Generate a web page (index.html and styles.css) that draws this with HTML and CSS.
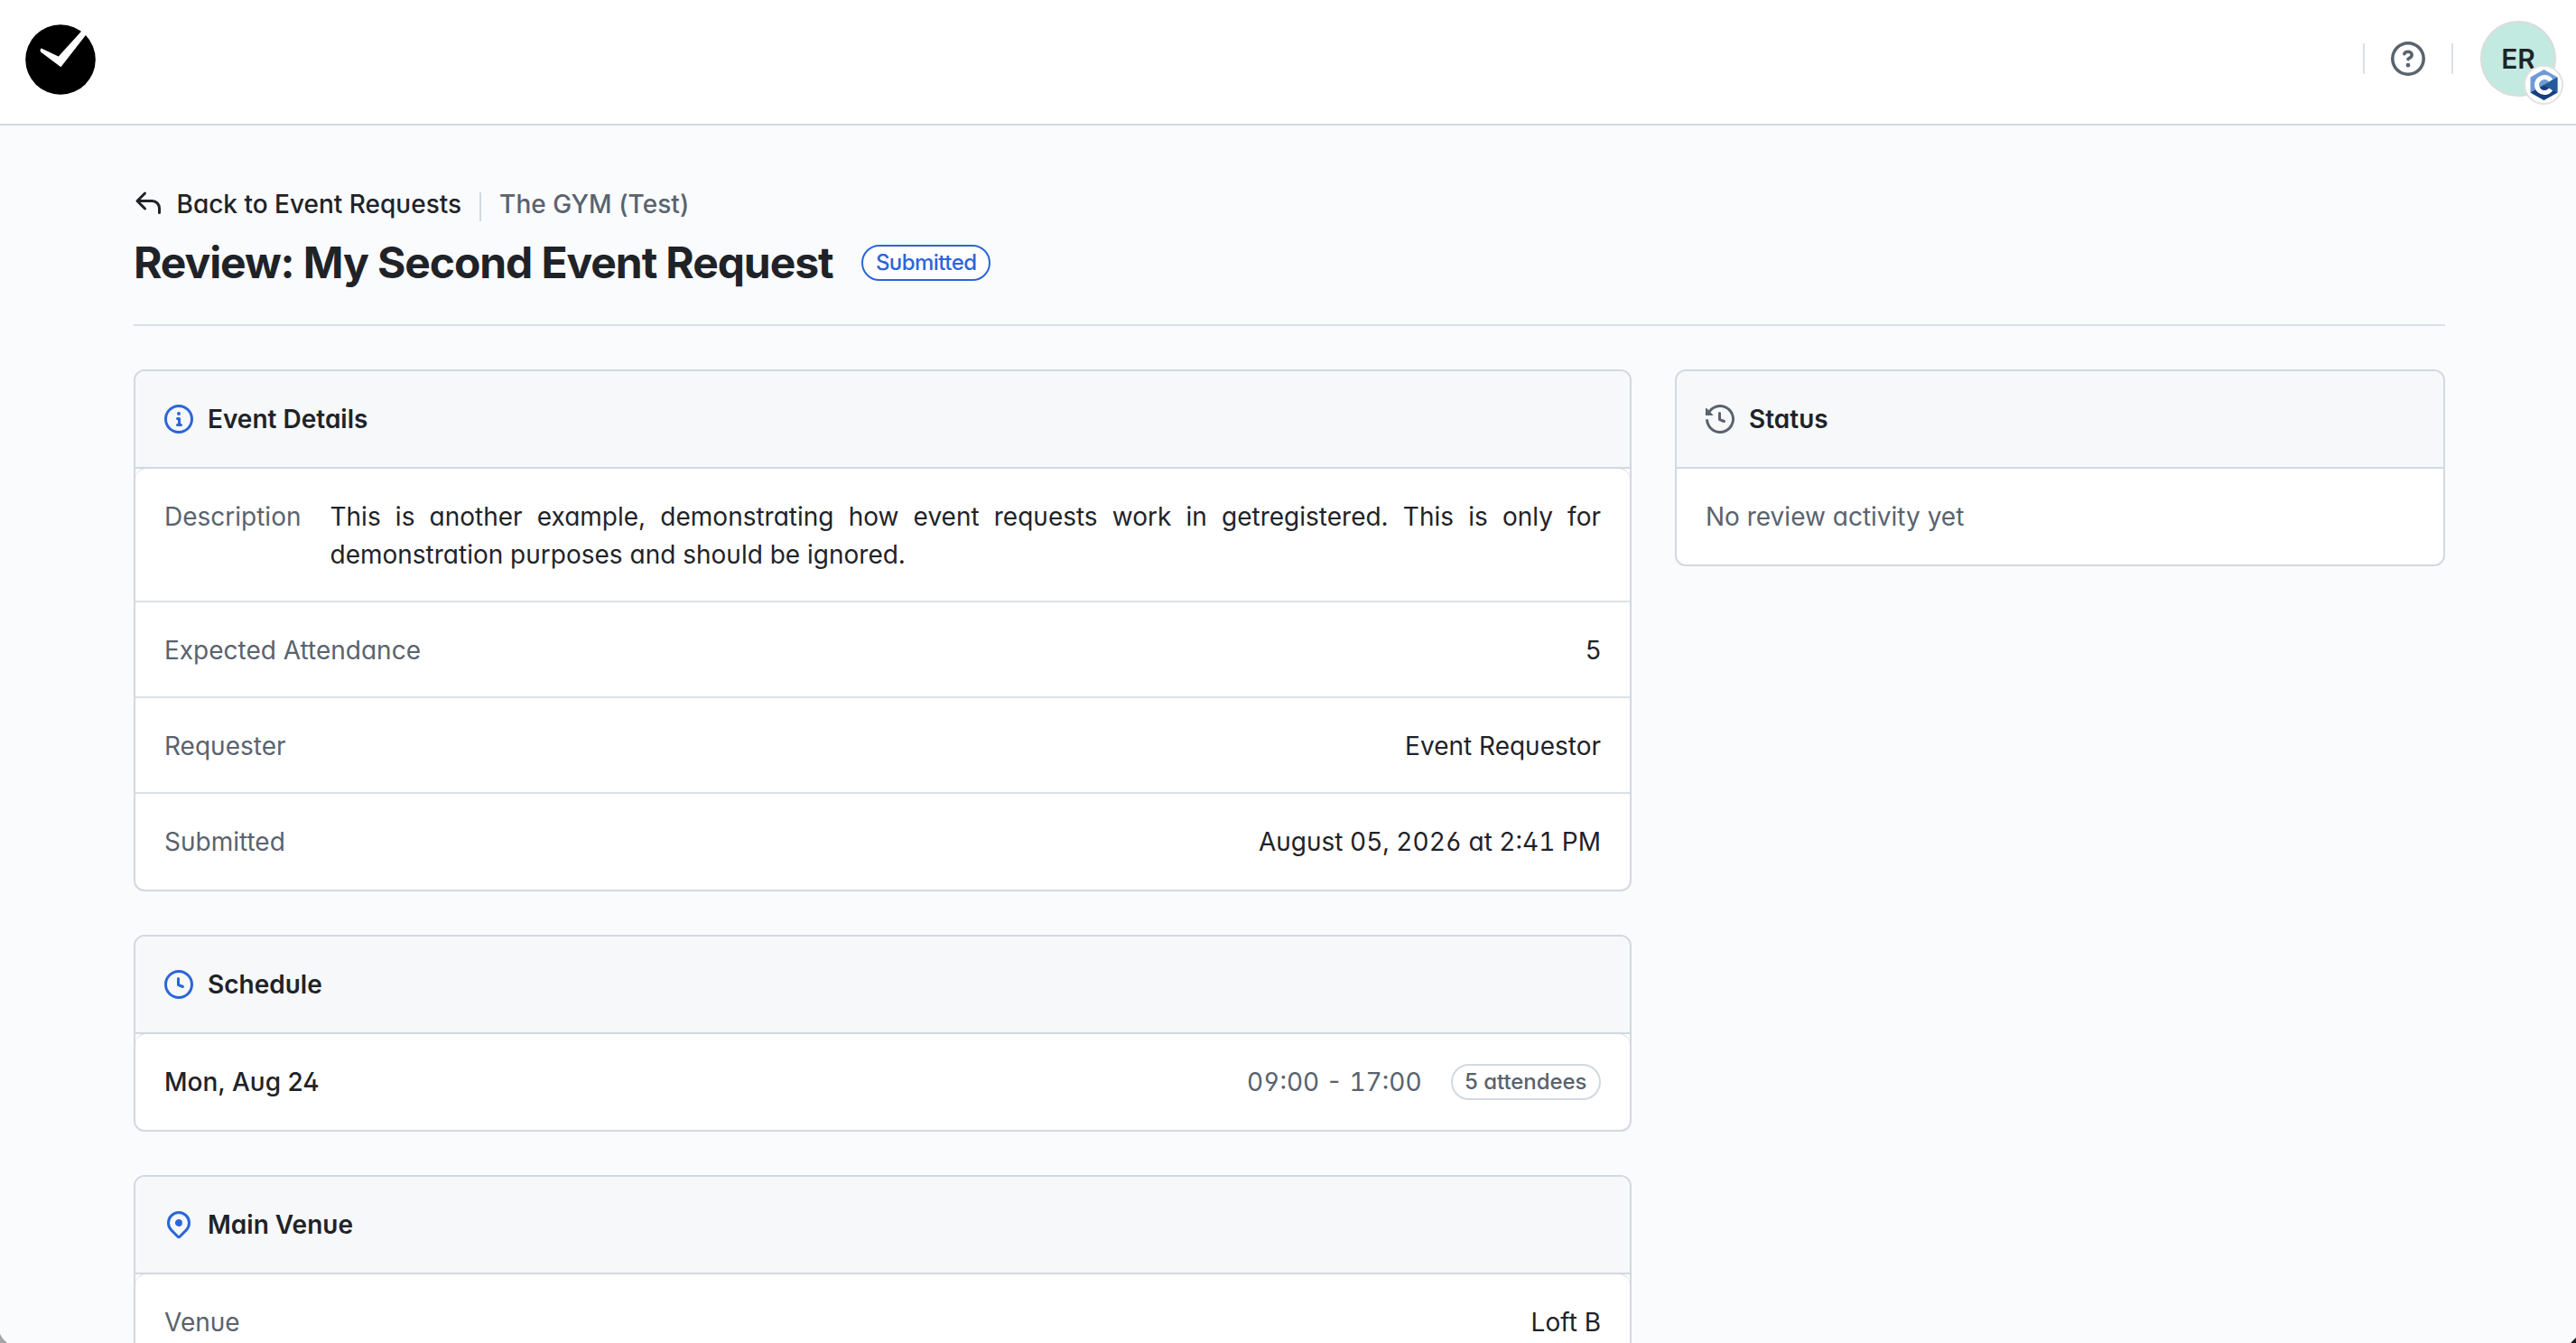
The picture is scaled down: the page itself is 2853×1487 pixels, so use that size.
FILE: index.html
```html
<!DOCTYPE html>
<html lang="en">
<head>
<meta charset="utf-8">
<title>Review: My Second Event Request</title>
<link rel="stylesheet" href="styles.css">
</head>
<body>
<header class="topbar">
  <a class="logo" href="#" aria-label="Home">
    <svg viewBox="0 0 78 78" width="78" height="78"><circle cx="39" cy="39" r="38.8"/><path fill="#fff" d="M36.8 35.4 62 7.8 68 0l8 0-9.5 12.4L39.4 47.2 17 30.4c-.8-2-.4-3.4.8-4Z"/></svg>
  </a>
  <nav class="topbar-actions">
    <span class="divider"></span>
    <a class="help" href="#" aria-label="Help">
      <svg class="icon" viewBox="0 0 16 16"><path d="M0 8a8 8 0 1 1 16 0A8 8 0 0 1 0 8Zm8-6.5a6.5 6.5 0 1 0 0 13 6.5 6.5 0 0 0 0-13ZM6.92 6.085h.001a.749.749 0 1 1-1.342-.67c.169-.339.436-.701.849-.977C6.845 4.16 7.369 4 8 4a2.756 2.756 0 0 1 1.637.525c.503.377.863.965.863 1.725 0 .448-.115.83-.329 1.15-.205.307-.47.513-.692.662-.109.072-.22.138-.313.195l-.006.004a6.24 6.24 0 0 0-.26.16.952.952 0 0 0-.276.245.75.75 0 0 1-1.248-.832c.184-.264.42-.489.692-.661.103-.067.207-.132.313-.195l.007-.004c.1-.061.182-.11.258-.161a.969.969 0 0 0 .277-.245C8.96 6.514 9 6.427 9 6.25a.612.612 0 0 0-.262-.525A1.27 1.27 0 0 0 8 5.5c-.369 0-.595.09-.74.187a1.01 1.01 0 0 0-.34.398ZM9 11a1 1 0 1 1-2 0 1 1 0 0 1 2 0Z"/></svg>
    </a>
    <span class="divider"></span>
    <div class="avatar">ER
      <span class="avatar-badge">
        <svg viewBox="0 0 30 34" width="31" height="34"><path fill="#6f9bd4" d="M15 0 30 8.5v17L15 34 0 25.500v-17Z"/><path fill="#25599c" d="M30 8.500v17L15 17Z"/><path fill="#184080" d="M0 25.500 15 17l15 8.500L15 34Z"/><path fill="none" stroke="#fff" stroke-width="5" d="M22.600 12.200a8.500 8.500 0 1 0 0 9.600"/></svg>
      </span>
    </div>
  </nav>
</header>

<main class="page">
  <div class="page-header">
    <div class="crumbs">
      <a class="back" href="#">
        <svg class="icon" viewBox="0 0 16 16"><path d="M6.78 1.97a.75.75 0 0 1 0 1.06L3.81 6h6.44A4.75 4.75 0 0 1 15 10.75v2.5a.75.75 0 0 1-1.5 0v-2.5a3.25 3.25 0 0 0-3.25-3.25H3.81l2.97 2.97a.749.749 0 0 1-.326 1.275.749.749 0 0 1-.734-.215L1.47 7.28a.75.75 0 0 1 0-1.06l4.25-4.25a.75.75 0 0 1 1.06 0Z"/></svg>
        <span>Back to Event Requests</span>
      </a>
      <span class="crumb-divider"></span>
      <span class="muted crumb-org">The GYM (Test)</span>
    </div>
    <div class="title-row">
      <h1>Review: My Second Event Request</h1>
      <span class="pill pill-blue">Submitted</span>
    </div>
  </div>

  <div class="columns">
    <div class="main-column">
      <section class="card">
        <h2 class="card-header">
          <svg class="icon blue" viewBox="0 0 16 16"><path d="M0 8a8 8 0 1 1 16 0A8 8 0 0 1 0 8Zm8-6.5a6.5 6.5 0 1 0 0 13 6.5 6.5 0 0 0 0-13ZM6.5 7.75A.75.75 0 0 1 7.25 7h1a.75.75 0 0 1 .75.75v2.75h.25a.75.75 0 0 1 0 1.5h-2a.75.75 0 0 1 0-1.5h.25v-2h-.25a.75.75 0 0 1-.75-.75ZM8 6a1 1 0 1 1 0-2 1 1 0 0 1 0 2Z"/></svg>
          Event Details
        </h2>
        <div class="rows">
          <div class="row"><span class="muted">Description</span><p class="description">This is another example, demonstrating how event requests work in getregistered. This is only for demonstration purposes and should be ignored.</p></div>
          <div class="row"><span class="muted">Expected Attendance</span><span>5</span></div>
          <div class="row"><span class="muted">Requester</span><span>Event Requestor</span></div>
          <div class="row"><span class="muted">Submitted</span><span class="tabular">August 05, 2026 at 2:41 PM</span></div>
        </div>
      </section>

      <section class="card">
        <h2 class="card-header">
          <svg class="icon blue" viewBox="0 0 16 16"><path d="M8 0a8 8 0 1 1 0 16A8 8 0 0 1 8 0ZM1.5 8a6.5 6.5 0 1 0 13 0 6.5 6.5 0 0 0-13 0Zm7-3.25v2.992l2.028.812a.75.75 0 0 1-.557 1.392l-2.5-1A.751.751 0 0 1 7 8.25v-3.5a.75.75 0 0 1 1.5 0Z"/></svg>
          Schedule
        </h2>
        <div class="rows">
          <div class="row"><span class="date">Mon, Aug 24</span><span class="slot"><span class="muted tabular time">09:00 - 17:00</span><span class="pill">5 attendees</span></span></div>
        </div>
      </section>

      <section class="card">
        <h2 class="card-header">
          <svg class="icon blue" viewBox="0 0 16 16"><path d="m12.596 11.596-3.535 3.536a1.5 1.5 0 0 1-2.122 0l-3.535-3.536a6.5 6.5 0 1 1 9.192-9.193 6.5 6.5 0 0 1 0 9.193Zm-1.06-8.132v-.001a5 5 0 1 0-7.072 7.072L8 14.07l3.536-3.534a5 5 0 0 0 0-7.072ZM8 9a2 2 0 1 1-.001-3.999A2 2 0 0 1 8 9Z"/></svg>
          Main Venue
        </h2>
        <div class="rows">
          <div class="row"><span class="muted">Venue</span><span>Loft B</span></div>
        </div>
      </section>
    </div>

    <aside>
      <section class="card">
        <h2 class="card-header">
          <svg class="icon muted" viewBox="0 0 16 16"><path d="m.427 1.927 1.215 1.215a8.002 8.002 0 1 1-1.6 5.685.75.75 0 1 1 1.493-.154 6.5 6.5 0 1 0 1.18-4.458l1.358 1.358A.25.25 0 0 1 3.896 6H.25A.25.25 0 0 1 0 5.75V2.104a.25.25 0 0 1 .427-.177ZM7.75 4a.75.75 0 0 1 .75.75v2.992l2.028.812a.75.75 0 0 1-.557 1.392l-2.5-1A.751.751 0 0 1 7 8.25v-3.5A.75.75 0 0 1 7.75 4Z"/></svg>
          Status
        </h2>
        <p class="empty muted">No review activity yet</p>
      </section>
    </aside>
  </div>
</main>
<span class="corner corner-left"></span>
<span class="corner corner-right"></span>
</body>
</html>
```
FILE: styles.css
```css
* { box-sizing: border-box; margin: 0; }

body {
  height: 1487px;
  overflow: hidden;
  background: #fafbfd;
  color: #1f2328;
  font: 400 28px/42px Inter, sans-serif;
  font-feature-settings: "cv02", "cv03", "cv04", "cv06", "cv11";
}

a { color: inherit; text-decoration: none; }
svg { display: block; flex: none; }
.icon { width: 32px; height: 32px; fill: currentColor; }
.muted { color: #59636e; }
.blue { color: #2b66d9; }
.tabular { font-variant-numeric: tabular-nums; }

.topbar {
  display: flex;
  justify-content: space-between;
  height: 139px;
  padding: 23px 22px 0 28px;
  border-bottom: 2px solid #d1d9e0;
  background: #fff;
}
.logo { padding-top: 3.6px; }
.topbar-actions { display: flex; align-items: center; height: 84px; }
.divider { width: 2px; height: 34px; background: #dae0e7; }
.help { margin: 0 29px; color: #59636e; }
.help .icon { width: 38px; height: 38px; }
.avatar {
  position: relative;
  width: 84px;
  height: 84px;
  margin-left: 30px;
  border: 2px solid #d9dcdc;
  border-radius: 50%;
  background: #c2eae0;
  font-size: 30px;
  font-weight: 600;
  line-height: 80px;
  text-align: center;
}
.avatar-badge {
  position: absolute;
  top: 47px;
  left: 46px;
  display: grid;
  place-items: center;
  width: 44px;
  height: 44px;
  border: 2px solid #dfe1e2;
  border-radius: 50%;
  background: #fff;
}

.page { padding: 66px 145px 0 148px; }
.page-header { height: 156px; border-bottom: 2px solid #dae0e7; }
.crumbs { display: flex; align-items: flex-start; }
.back { display: flex; font-weight: 500; }
.back .icon { margin: 4px 15.500px 0 0; }
.crumb-divider { width: 2px; height: 32px; margin: 8px 20.500px 0 19.500px; background: #d1d9e0; }
.crumb-org { font-weight: 500; letter-spacing: 0.04px; }
.title-row { display: flex; align-items: center; gap: 32px; height: 72px; margin-top: 8px; }
h1 {
  font-size: 48px;
  font-weight: 700;
  line-height: 72px;
  letter-spacing: -1.1px;
  font-feature-settings: normal;
}
.pill {
  height: 40px;
  padding: 0 13.500px;
  border: 2px solid #d1d9e0;
  border-radius: 20px;
  background: #fff;
  color: #59636e;
  font-size: 24px;
  font-weight: 500;
  line-height: 36px;
  letter-spacing: -0.05px;
}
.pill-blue { border-color: #2b66d9; color: #2b66d9; letter-spacing: -0.55px; }

.columns {
  display: grid;
  grid-template-columns: 1fr 853px;
  align-items: start;
  gap: 48px;
  margin-top: 48px;
}
.main-column { display: grid; gap: 48px; }
.card {
  overflow: hidden;
  border: 2px solid #d1d9e0;
  border-radius: 12px;
  background: #fff;
}
.card-header {
  display: flex;
  align-items: center;
  gap: 16px;
  height: 108px;
  padding: 0 32px;
  border-bottom: 2px solid #d1d9e0;
  background: #f6f8fa;
  font-size: 28px;
  font-weight: 600;
}
.rows { border-radius: 12px 12px 0 0; box-shadow: 0 -1px 0 #d1d9e0; }
.row {
  display: flex;
  justify-content: space-between;
  gap: 32px;
  padding: 32px 32px 30px;
  border-bottom: 2px solid #dae0e7;
}
.row:last-child { padding-bottom: 32px; border-bottom: 0; }
.description { flex: 1; text-align: justify; }
.date { font-weight: 500; }
.slot { display: flex; align-items: center; gap: 32px; height: 42px; }
.empty { padding: 32px; }

.corner { position: absolute; bottom: 0; }
.corner-left {
  left: 0;
  width: 8px;
  height: 10px;
  background: linear-gradient(51deg, #a6a6a6 60%, #333 60%);
  clip-path: polygon(0 0, 3px 5px, 8px 10px, 0 10px);
}
.corner-right {
  right: 0;
  width: 6px;
  height: 6px;
  background: #1c1f20;
  clip-path: polygon(100% 0, 100% 100%, 0 100%);
}
```
